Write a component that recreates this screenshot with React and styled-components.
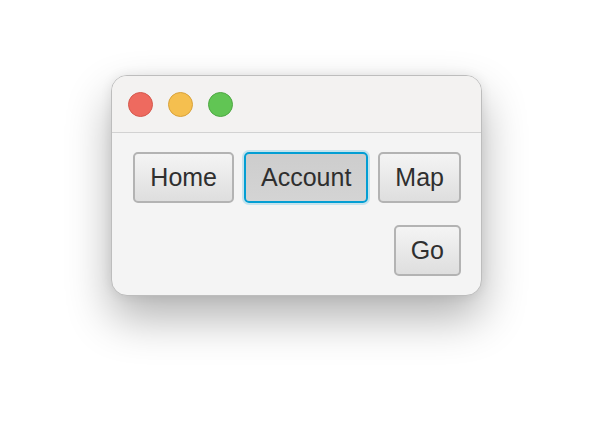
import styled, { createGlobalStyle } from "styled-components";

const GlobalStyle = createGlobalStyle`
  body {
    margin: 0;
    background: #ffffff;
    font-family: "Liberation Sans", Arial, sans-serif;
  }
`;

const Page = styled.div`
  width: 594px;
  height: 444px;
  display: flex;
  justify-content: center;
  align-items: flex-start;
  padding-top: 75px;
  box-sizing: border-box;
`;

const Window = styled.div`
  width: 371px;
  height: 221px;
  margin-right: 1px;
  border-radius: 16px;
  background: #f4f4f4;
  border: 1px solid #bdbdbd;
  box-sizing: border-box;
  box-shadow: 0 22px 45px rgba(0, 0, 0, 0.3), 0 0 12px rgba(0, 0, 0, 0.08);
  overflow: hidden;
  display: flex;
  flex-direction: column;
`;

const TitleBar = styled.div`
  height: 56px;
  flex: none;
  display: flex;
  align-items: center;
  gap: 15px;
  padding-left: 16px;
  background: #f3f2f1;
  border-bottom: 1px solid #d2d2d2;
`;

const Light = styled.span`
  width: 23px;
  height: 23px;
  border-radius: 50%;
  background: ${(p) => p.$fill};
  border: 1px solid ${(p) => p.$edge};
`;

const Content = styled.div`
  flex: 1;
  display: flex;
  flex-direction: column;
  gap: 22px;
  padding: 19px 20px 0 20px;
`;

const Row = styled.div`
  display: flex;
  justify-content: flex-end;
  gap: 10px;
`;

const Button = styled.button`
  height: 51px;
  padding: 0 15px;
  box-sizing: border-box;
  border-radius: 5px;
  font-family: "Liberation Sans", Arial, sans-serif;
  font-size: 25px;
  color: #2f2f2f;
  border: 2px solid ${(p) => (p.$focused ? "#039ed3" : "#b3b3b3")};
  background: ${(p) =>
    p.$focused
      ? "linear-gradient(#cdcdcd, #d4d4d4)"
      : "linear-gradient(#f4f4f4, #dedede)"};
  box-shadow: ${(p) =>
    p.$focused ? "0 0 0 2px rgba(3, 158, 211, 0.2)" : "none"};
  cursor: pointer;
`;

export default function App() {
  return (
    <>
      <GlobalStyle />
      <Page>
        <Window>
          <TitleBar>
            <Light $fill="#ee6a5f" $edge="#d5584d" />
            <Light $fill="#f5bf4f" $edge="#d9a23a" />
            <Light $fill="#61c554" $edge="#4ea843" />
          </TitleBar>
          <Content>
            <Row>
              <Button>Home</Button>
              <Button $focused>Account</Button>
              <Button>Map</Button>
            </Row>
            <Row>
              <Button>Go</Button>
            </Row>
          </Content>
        </Window>
      </Page>
    </>
  );
}
